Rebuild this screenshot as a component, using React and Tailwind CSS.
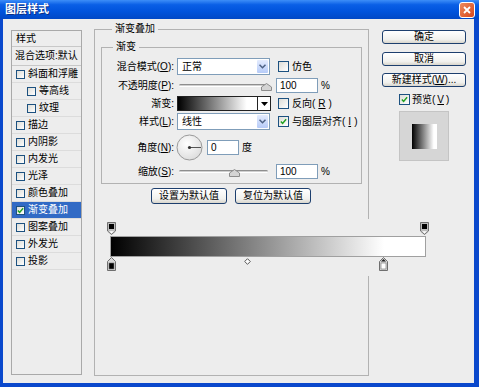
import React from 'react';

// Photoshop "图层样式" dialog, XP look

const Ul = ({ children }) => <span className="underline underline-offset-1">{children}</span>;

const Check = ({ checked = false, small = false }) => (
  <span
    className={`${small ? 'h-[9px] w-[9px]' : 'h-[11px] w-[11px]'} inline-flex shrink-0 items-center justify-center border border-[#1c5180] bg-[linear-gradient(135deg,#dcdcd7,#ffffff)]`}
  >
    {checked && (
      <svg viewBox="0 0 8 8" className="h-[7px] w-[7px]">
        <path d="M1 4 L3 6.2 L7 1.5" stroke="#21a121" strokeWidth="1.7" fill="none" />
      </svg>
    )}
  </span>
);

const Chevron = () => (
  <svg width="7" height="5" viewBox="0 0 7 5">
    <path d="M0.5 0.8 L3.5 3.8 L6.5 0.8" stroke="#4d6185" strokeWidth="1.5" fill="none" />
  </svg>
);

const Select = ({ value }) => (
  <div className="flex h-[17px] w-[93px] items-center border border-[#7f9db9] bg-white">
    <span className="flex-1 pl-[4px] leading-none">{value}</span>
    <span className="mr-px flex h-[13px] w-[11px] items-center justify-center rounded-[1px] bg-[linear-gradient(#e4ecfe,#b6cbf8)]">
      <Chevron />
    </span>
  </div>
);

const Thumb = ({ left }) => (
  <svg width="11" height="8" className="absolute top-[3px]" style={{ left }}>
    <path d="M0.5 7.5 V4 L5.5 0.5 L10.5 4 V7.5 Z" fill="#d4d4d4" stroke="#8c8c8c" />
  </svg>
);

const Slider = ({ pos }) => (
  <div className="relative h-[12px] w-[93px]">
    <div className="absolute left-[2px] right-[2px] top-[4px] h-[3px] rounded-full border-t border-b border-t-[#8e8e8e] border-b-white bg-[#cfcfcf]" />
    <Thumb left={pos} />
  </div>
);

const Input = ({ value, w = 'w-[42px]' }) => (
  <div className={`flex h-[15px] items-center border border-[#7f9db9] bg-white pl-[3px] leading-none ${w}`}>{value}</div>
);

const Btn = ({ children, className = '' }) => (
  <div
    className={`flex items-center justify-center rounded-[3px] border border-[#1d3f6e] bg-[linear-gradient(#ffffff,#f1f1ee_70%,#d8d5cc)] leading-none ${className}`}
  >
    {children}
  </div>
);

const Row = ({ label, className = '', children }) => (
  <div className={`flex items-center ${className}`}>
    <div className="w-[72px] text-right leading-none">{label}</div>
    <div className="ml-[3px] flex items-center">{children}</div>
  </div>
);

const TopStop = ({ left }) => (
  <svg width="9" height="13" className="absolute top-0" style={{ left }}>
    <path d="M0.5 0.5 H8.5 V9 L4.5 12.5 L0.5 9 Z" fill="#bdbdbd" stroke="#6f6f6f" />
    <rect x="2" y="2" width="5" height="5" fill="#000" />
    <path d="M2 9.3 L4.5 11.4 L7 9.3 Z" fill="#fff" />
  </svg>
);

const BottomStop = ({ left, color, active }) => (
  <svg width="9" height="14" className="absolute top-0" style={{ left }}>
    <path d="M0.5 13.5 H8.5 V4.5 L4.5 0.5 L0.5 4.5 Z" fill="#d8d8d8" stroke="#6f6f6f" />
    {active && <path d="M2 4.5 L4.5 2 L7 4.5 Z" fill="#222" />}
    <rect x="2" y="6" width="5" height="6" fill={color} stroke="#6f6f6f" strokeWidth="0.6" />
  </svg>
);

const panelItems = [
  { label: '斜面和浮雕' },
  { label: '等高线', sub: true },
  { label: '纹理', sub: true },
  { label: '描边' },
  { label: '内阴影' },
  { label: '内发光' },
  { label: '光泽' },
  { label: '颜色叠加' },
  { label: '渐变叠加', checked: true, selected: true },
  { label: '图案叠加' },
  { label: '外发光' },
  { label: '投影' },
];

export default function App() {
  return (
    <div className="flex h-[387px] w-[479px] flex-col bg-[#0a48cc] font-['Liberation_Sans','Noto_Sans_CJK_SC',sans-serif] text-[10px] text-black">
      {/* title bar */}
      <div className="flex h-[19px] items-center justify-between bg-[linear-gradient(#3d8ef8,#0a5fe6_25%,#0053dc_60%,#0048c6)] pl-[5px] pr-[4px]">
        <span className="text-[11px] font-bold leading-none text-white [text-shadow:1px_1px_0_#0a2f86]">图层样式</span>
        <span className="flex h-[16px] w-[16px] items-center justify-center rounded-[3px] border border-white bg-[linear-gradient(135deg,#ec8a5e,#d8471c)]">
          <svg width="8" height="8" viewBox="0 0 8 8">
            <path d="M1 1 L7 7 M7 1 L1 7" stroke="#fff" strokeWidth="1.8" />
          </svg>
        </span>
      </div>

      {/* body */}
      <div className="ml-[3px] flex h-[364px] w-[471px] items-start bg-[#ededed]">
        {/* styles list */}
        <div className="ml-[8px] mt-[11px] h-[345px] w-[71px] border border-[#a9a9a9]">
          <div className="flex h-[16px] items-center border-b border-[#c8c8c8] pl-[4px] leading-none">样式</div>
          <div className="flex h-[19px] items-center border-b border-[#c8c8c8] pl-[3px] leading-none">混合选项:默认</div>
          {panelItems.map((it) => (
            <div
              key={it.label}
              className={`flex h-[17px] items-center gap-[3px] border-b border-[#dcdcdc] leading-none ${it.sub ? 'pl-[15px]' : 'pl-[4px]'} ${it.selected ? 'bg-[#316ac5] text-white' : ''}`}
            >
              <Check small checked={it.checked} />
              <span>{it.label}</span>
            </div>
          ))}
        </div>

        {/* gradient overlay group */}
        <fieldset className="ml-[12px] mt-[3px] h-[354px] w-[275px] min-w-0 border border-[#b2b2b2] pl-[6px]">
          <legend className="ml-[11px] px-[3px] leading-[14px]">渐变叠加</legend>

          <fieldset className="mt-[4px] w-[261px] min-w-0 border border-[#b2b2b2] pb-[4px]">
            <legend className="ml-[11px] px-[3px] leading-[14px]">渐变</legend>

            <Row className="mt-[4px] h-[17px]" label={<>混合模式(<Ul>O</Ul>):</>}>
              <Select value="正常" />
              <span className="ml-[8px] flex items-center gap-[3px] leading-none">
                <Check />
                仿色
              </span>
            </Row>

            <Row className="mt-[3px] h-[15px]" label={<>不透明度(<Ul>P</Ul>):</>}>
              <Slider pos={84} />
              <span className="ml-[6px]">
                <Input value="100" />
              </span>
              <span className="ml-[3px] leading-none">%</span>
            </Row>

            <Row className="mt-[3px] h-[15px]" label="渐变:">
              <div className="flex h-[15px] w-[94px] border border-[#222]">
                <div className="flex-1 bg-[linear-gradient(to_right,#000,#fff_87%,#fff)]" />
                <div className="flex w-[13px] items-center justify-center border-l border-[#222] bg-white">
                  <svg width="7" height="4"><path d="M0 0 H7 L3.5 4 Z" fill="#000" /></svg>
                </div>
              </div>
              <span className="ml-[7px] flex items-center gap-[3px] leading-none">
                <Check />
                反向(<Ul>R</Ul>)
              </span>
            </Row>

            <Row className="mt-[2px] h-[17px]" label={<>样式(<Ul>L</Ul>):</>}>
              <Select value="线性" />
              <span className="ml-[8px] flex items-center gap-[3px] leading-none">
                <Check checked />
                与图层对齐(<Ul>I</Ul>)
              </span>
            </Row>

            <Row className="mt-[4px] h-[27px]" label={<>角度(<Ul>N</Ul>):</>}>
              <svg width="27" height="27" className="-ml-px">
                <defs>
                  <radialGradient id="dial" cx="40%" cy="35%" r="70%">
                    <stop offset="0" stopColor="#ffffff" />
                    <stop offset="1" stopColor="#dcdcdc" />
                  </radialGradient>
                </defs>
                <circle cx="13.5" cy="13.5" r="12.5" fill="url(#dial)" stroke="#9a9a9a" />
                <line x1="13.5" y1="13.5" x2="25" y2="13.5" stroke="#555" />
                <circle cx="13.5" cy="13.5" r="1.6" fill="#333" />
              </svg>
              <span className="ml-[4px]">
                <Input value="0" w="w-[32px]" />
              </span>
              <span className="ml-[3px] leading-none">度</span>
            </Row>

            <Row className="mt-[3px] h-[15px]" label={<>缩放(<Ul>S</Ul>):</>}>
              <Slider pos={52} />
              <span className="ml-[6px]">
                <Input value="100" />
              </span>
              <span className="ml-[3px] leading-none">%</span>
            </Row>
          </fieldset>

          <div className="mt-[4px] flex h-[16px]">
            <Btn className="ml-[50px] h-[16px] w-[76px]">设置为默认值</Btn>
            <Btn className="ml-[8px] h-[16px] w-[76px]">复位为默认值</Btn>
          </div>

          {/* gradient editor strip */}
          <div className="ml-[4px] mt-[15px] w-[326px] bg-[#ededed] pb-[5px] pt-[3px]">
            <div className="relative h-[13px]">
              <TopStop left={2} />
              <TopStop left={315} />
            </div>
            <div className="ml-[5px] mt-px h-[21px] w-[316px] border border-[#a0a0a0] bg-[linear-gradient(to_right,#000,#fff_87%,#fff)]" />
            <div className="relative h-[14px]">
              <BottomStop left={2} color="#000" />
              <svg width="7" height="7" className="absolute top-[1px]" style={{ left: 139 }}>
                <path d="M3.5 0.7 L6.3 3.5 L3.5 6.3 L0.7 3.5 Z" fill="#fff" stroke="#555" />
              </svg>
              <BottomStop left={274} color="#fff" active />
            </div>
          </div>
        </fieldset>

        {/* right column */}
        <div className="ml-[13px] mt-[11px] flex w-[84px] flex-col">
          <Btn className="h-[14px]">确定</Btn>
          <Btn className="mt-[8px] h-[14px]">取消</Btn>
          <Btn className="mt-[7px] h-[14px]">
            新建样式(<Ul>W</Ul>)...
          </Btn>
          <div className="ml-[17px] mt-[7px] flex items-center gap-[2px] leading-none">
            <Check checked />
            预览(<Ul>V</Ul>)
          </div>
          <div className="ml-[17px] mt-[6px] flex h-[50px] w-[50px] items-center justify-center border border-[#c4c4c4] bg-[#d6d6d6]">
            <div className="h-[25px] w-[25px] bg-[linear-gradient(to_right,#000,#fff_87%,#fff)]" />
          </div>
        </div>
      </div>
    </div>
  );
}
